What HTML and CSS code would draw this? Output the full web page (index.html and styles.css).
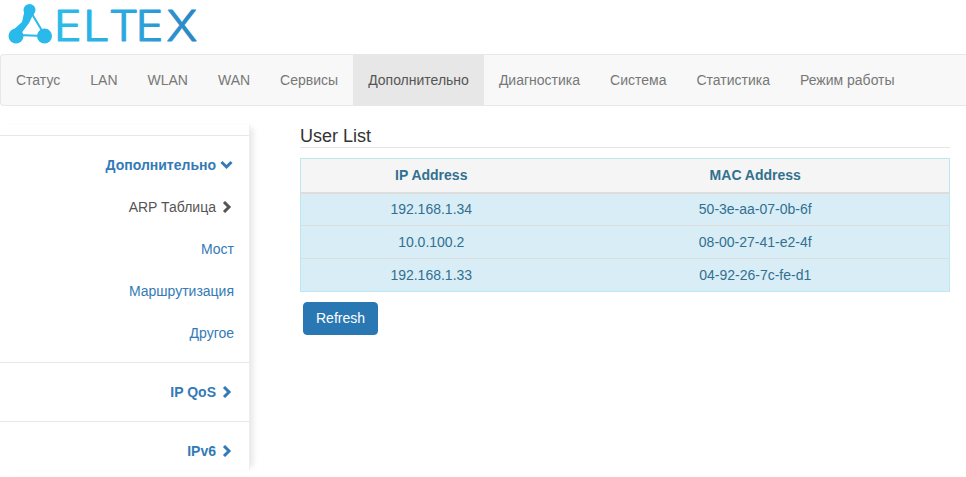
FILE: index.html
```html
<!DOCTYPE html>
<html lang="ru">
<head>
<meta charset="utf-8">
<title>ELTEX</title>
<link rel="stylesheet" href="styles.css">
</head>
<body>
<header class="logo-bar">
  <svg class="logo" width="210" height="54" viewBox="0 0 210 54" role="img" aria-label="ELTEX">
    <defs>
      <linearGradient id="lg" gradientUnits="userSpaceOnUse" x1="50" x2="176" y1="0" y2="0">
        <stop offset="0" stop-color="#2bbcea"/>
        <stop offset="0.55" stop-color="#2ba6dd"/>
        <stop offset="1" stop-color="#2b84c4"/>
      </linearGradient>
    </defs>
    <circle cx="29.500" cy="10" r="6" fill="#29b9ea"/>
    <circle cx="16" cy="36" r="7.500" fill="#29b9ea"/>
    <circle cx="44.500" cy="36" r="7.500" fill="#29b9ea"/>
    <path d="M24.500 11 L34 13 L29 23 L20 35 L12 31 L22 22 Z" fill="#29b9ea"/>
    <path d="M32 14 L44 34 M18 35 L44 36" stroke="#29b9ea" stroke-width="2" fill="none"/>
    <text class="logo-text" transform="scale(1.12 1)" x="48 74 97 121 148.500" y="41" fill="url(#lg)" stroke="url(#lg)">ELTEX</text>
  </svg>
</header>
<nav class="navbar">
  <a class="nav-item" href="#">Статус</a>
  <a class="nav-item" href="#">LAN</a>
  <a class="nav-item" href="#">WLAN</a>
  <a class="nav-item" href="#">WAN</a>
  <a class="nav-item" href="#">Сервисы</a>
  <a class="nav-item active" href="#">Дополнительно</a>
  <a class="nav-item" href="#">Диагностика</a>
  <a class="nav-item" href="#">Система</a>
  <a class="nav-item" href="#">Статистика</a>
  <a class="nav-item" href="#">Режим работы</a>
</nav>
<div class="layout">
  <aside class="sidebar">
    <section class="side-group first">
      <a class="side-link head" href="#">Дополнительно
        <svg class="chev" width="13" height="12" viewBox="0 0 13 12"><path d="M1.500 3 6.500 8 11.500 3"/></svg></a>
      <a class="side-link current" href="#">ARP Таблица
        <svg class="chev" width="13" height="12" viewBox="0 0 13 12"><path d="M4 1 9 6 4 11"/></svg></a>
      <a class="side-link sub" href="#">Мост</a>
      <a class="side-link sub" href="#">Маршрутизация</a>
      <a class="side-link sub" href="#">Другое</a>
    </section>
    <section class="side-group">
      <a class="side-link head" href="#">IP QoS
        <svg class="chev" width="13" height="12" viewBox="0 0 13 12"><path d="M4 1 9 6 4 11"/></svg></a>
    </section>
    <section class="side-group">
      <a class="side-link head" href="#">IPv6
        <svg class="chev" width="13" height="12" viewBox="0 0 13 12"><path d="M4 1 9 6 4 11"/></svg></a>
    </section>
  </aside>
  <main class="content">
    <h4 class="title">User List</h4>
    <table class="users">
      <thead>
        <tr><th class="col-ip">IP Address</th><th>MAC Address</th></tr>
      </thead>
      <tbody>
        <tr><td>192.168.1.34</td><td>50-3e-aa-07-0b-6f</td></tr>
        <tr><td>10.0.100.2</td><td>08-00-27-41-e2-4f</td></tr>
        <tr><td>192.168.1.33</td><td>04-92-26-7c-fe-d1</td></tr>
      </tbody>
    </table>
    <button class="btn" type="button">Refresh</button>
  </main>
</div>
</body>
</html>
```
FILE: styles.css
```css
* { box-sizing: border-box; }
html, body { margin: 0; padding: 0; }
body {
  width: 966px;
  height: 477px;
  overflow: hidden;
  background: #fff;
  font-family: "Liberation Sans", Arial, sans-serif;
  font-size: 14px;
  line-height: 20px;
  color: #333;
}
a { text-decoration: none; }
.logo-bar { height: 54px; }
.logo { display: block; }
.logo-text {
  font-family: "Inter", "Liberation Sans", sans-serif;
  font-size: 42px;
  font-weight: 300;
  stroke-width: 1;
  stroke-linejoin: round;
}
.navbar {
  display: flex;
  height: 52px;
  background: #f8f8f8;
  border: 1px solid #e7e7e7;
  border-right: 0;
  border-radius: 4px 0 0 4px;
}
.nav-item {
  padding: 15px;
  line-height: 20px;
  color: #777;
}
.nav-item.active { background: #e7e7e7; color: #555; }
.layout { display: flex; }
.sidebar {
  width: 250px;
  height: 345px;
  margin-top: 19px;
  padding-top: 10px;
  border-right: 1px solid #eee;
  box-shadow: 6px 0 6px -3px rgba(0, 0, 0, .1);
  background: #fff;
}
.side-group { border-top: 1px solid #e7e7e7; padding: 9px 0 9px; }
.side-group + .side-group { padding: 9px 0; }
.side-link {
  display: flex;
  justify-content: flex-end;
  align-items: center;
  gap: 4px;
  height: 40px;
  padding-right: 16px;
  color: #337ab7;
  margin-bottom: 2px;
}
.side-group .side-link:last-child { margin-bottom: 0; }
.side-link.head { font-weight: 700; }
.side-link.current { color: #555; }
.side-link.sub { padding-right: 15px; }
.chev { fill: none; stroke: currentColor; stroke-width: 3; }
.content { width: 650px; margin-left: 50px; padding-top: 20px; }
.title {
  margin: 0 0 10px;
  height: 22px;
  font-size: 18px;
  font-weight: 400;
  line-height: 20px;
  border-bottom: 1px solid #e5e5e5;
}
.users {
  width: 650px;
  table-layout: fixed;
  border-collapse: collapse;
  border: 1px solid #bce8f1;
  text-align: center;
}
.col-ip { width: 261px; }
.users th {
  height: 34px;
  padding: 0;
  background: #f5f5f5;
  color: #31708f;
  border-bottom: 2px solid #ddd;
}
.users td {
  height: 33px;
  padding: 0;
  background: #d9edf7;
  color: #31708f;
  border-top: 1px solid #ddd;
}
.btn {
  display: block;
  margin: 10px 0 0 3px;
  width: 75px;
  height: 33px;
  padding: 0 0 2px;
  font: inherit;
  color: #fff;
  background: #2a78b3;
  border: 1px solid #2a78b3;
  border-radius: 4px;
}
```
